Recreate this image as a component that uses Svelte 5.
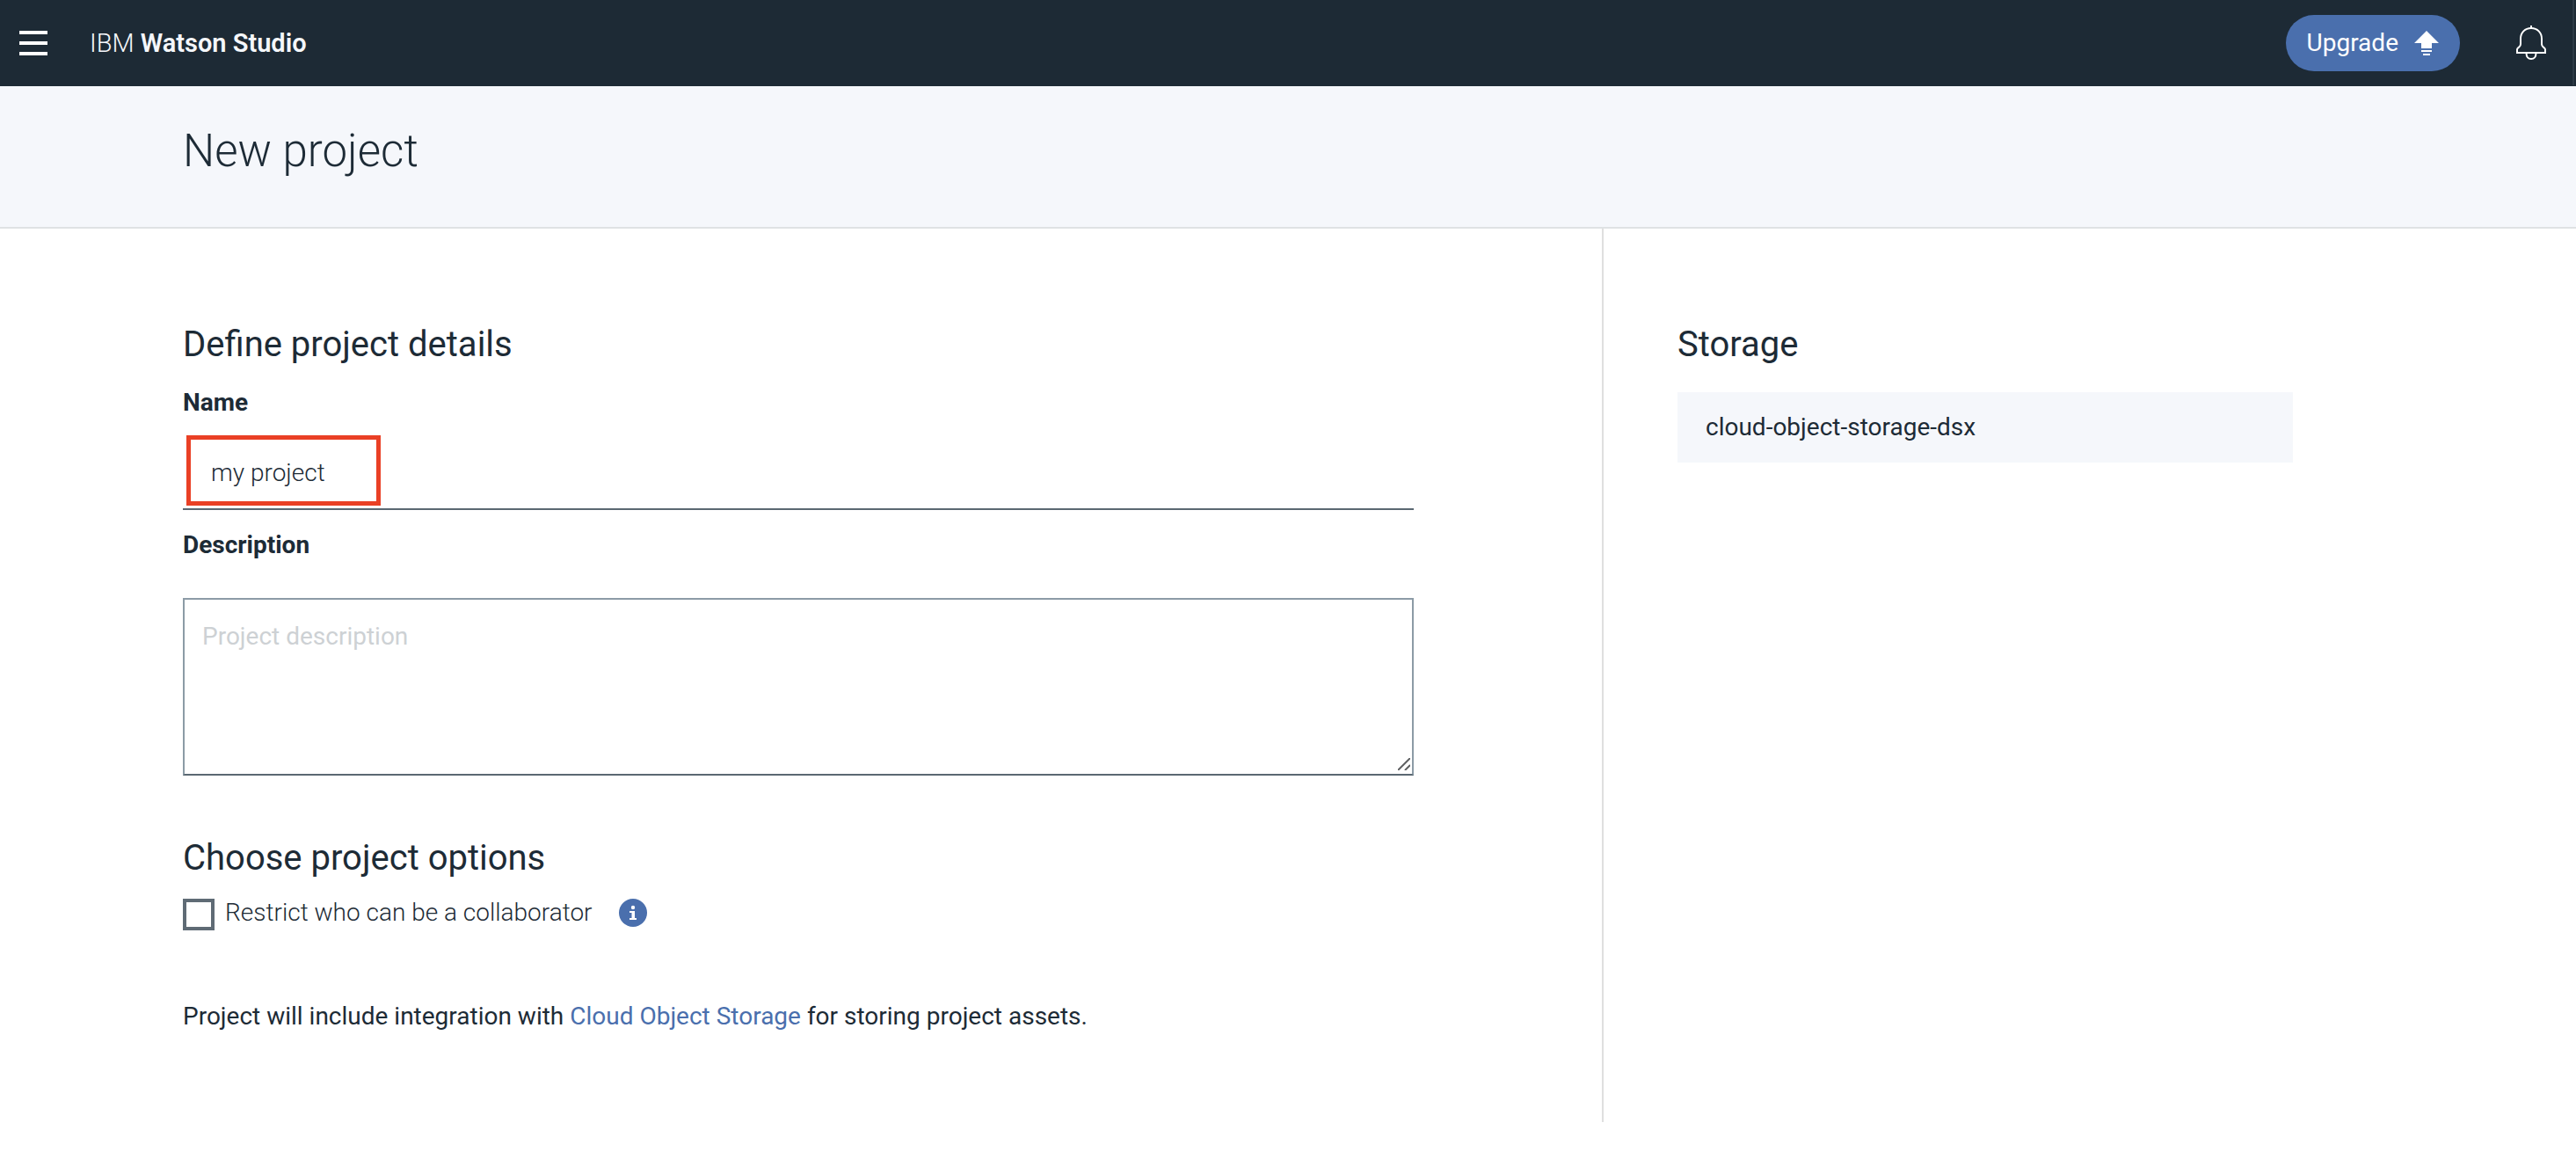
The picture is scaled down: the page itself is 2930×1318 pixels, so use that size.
<script lang="ts">
  let name = $state('my project');
  let description = $state('');
  let restricted = $state(false);
</script>

<div class="page">
  <header class="topbar">
    <button class="icon-button menu" type="button" aria-label="Menu">
      <svg width="32" height="28" viewBox="0 0 32 28" aria-hidden="true">
        <path d="M0 0h32v4H0zM0 12h32v4H0zM0 24h32v4H0z" fill="#fff" />
      </svg>
    </button>
    <a class="brand" href="#home">IBM <strong>Watson Studio</strong></a>
    <button class="upgrade" type="button">
      Upgrade
      <svg width="28" height="28" viewBox="0 0 28 28" aria-hidden="true">
        <path d="M14 0l14 14h-8v6H8v-6H0zM8 22h12v2H8zM10 26h8v2h-8z" fill="#fff" />
      </svg>
    </button>
    <button class="icon-button bell" type="button" aria-label="Notifications">
      <svg width="34" height="40" viewBox="0 0 34 40" aria-hidden="true">
        <g fill="none" stroke="#fff" stroke-width="2">
          <path d="M17 0v3" />
          <path d="M17 3C10 3 5 8 5 15v6c0 1.500-.4 2.400-1.500 3.300L1.800 25.800c-.5.500-.8 1-.8 1.700V31h32v-3.500c0-.7-.3-1.200-.8-1.700l-1.700-1.500C29.400 23.400 29 22.500 29 21v-6c0-7-5-12-12-12z" />
          <path d="M11.500 31.500c0 4 2.300 6.500 5.500 6.500s5.500-2.500 5.500-6.500" />
        </g>
      </svg>
    </button>
  </header>

  <div class="title-band">
    <h1>New project</h1>
  </div>

  <main class="content">
    <form class="details">
      <h2>Define project details</h2>
      <label class="field-label" for="project-name">Name</label>
      <div class="name-field">
        <input id="project-name" type="text" bind:value={name} />
        <span class="highlight" aria-hidden="true"></span>
      </div>
      <label class="field-label" for="project-description">Description</label>
      <div class="description-field">
        <textarea id="project-description" placeholder="Project description" bind:value={description}></textarea>
        <svg class="grip" width="14" height="14" viewBox="0 0 14 14" aria-hidden="true">
          <path d="M0 14L14 0M8 14l6-6" fill="none" stroke="#5f6062" stroke-width="2" />
        </svg>
      </div>

      <h2 class="options-heading">Choose project options</h2>
      <div class="option">
        <input id="restrict" type="checkbox" bind:checked={restricted} />
        <label for="restrict">Restrict who can be a collaborator</label>
        <button class="icon-button info" type="button" aria-label="More information">
          <svg width="32" height="32" viewBox="0 0 32 32" aria-hidden="true">
            <circle cx="16" cy="16" r="16" fill="#4a6fad" />
            <circle cx="16" cy="10" r="2.200" fill="#fff" />
            <path d="M12 14h6v8h2v2h-8v-2h2.500v-6H12z" fill="#fff" />
          </svg>
        </button>
      </div>
      <p>
        Project will include integration with <a href="#storage">Cloud Object Storage</a> for storing project assets.
      </p>
    </form>

    <aside class="storage" id="storage">
      <h2>Storage</h2>
      <div class="storage-item">cloud-object-storage-dsx</div>
    </aside>
  </main>
</div>

<style>
  :global(body) {
    margin: 0;
    background: #fff;
  }
  .page {
    color: #1d2b36;
    font-family: Roboto, 'Liberation Sans', sans-serif;
    font-size: 28px;
    font-weight: 400;
    line-height: 40px;
  }
  button,
  input,
  textarea {
    box-sizing: border-box;
    margin: 0;
    font: inherit;
    color: inherit;
  }
  svg {
    display: block;
  }
  .topbar {
    position: relative;
    display: flex;
    align-items: center;
    height: 98px;
    padding: 0 34px 0 22px;
    box-sizing: border-box;
    background: #1d2a35;
    color: #fff;
  }
  .topbar::after {
    content: '';
    position: absolute;
    top: 0;
    right: 2px;
    width: 2px;
    height: 97px;
    background: #2d3a45;
  }
  .icon-button {
    padding: 0;
    border: 0;
    background: none;
  }
  .brand {
    margin-left: 48px;
    color: #f5f7fb;
    font-size: 29px;
    font-weight: 300;
    text-decoration: none;
  }
  .brand strong {
    font-weight: 600;
  }
  .upgrade {
    display: flex;
    align-items: center;
    gap: 18px;
    height: 64px;
    margin-left: auto;
    padding: 0 24px;
    border: 0;
    border-radius: 32px;
    background: #4a6fad;
    color: #fff;
  }
  .bell {
    margin-left: 64px;
  }
  .title-band {
    padding: 42px 208px 54px;
    border-bottom: 2px solid #dfe2e4;
    background: #f5f7fb;
  }
  h1 {
    margin: 0;
    font-size: 51px;
    font-weight: 300;
    line-height: 64px;
  }
  h2 {
    margin: 0;
    font-size: 40px;
    font-weight: 400;
    line-height: 52px;
  }
  .content {
    display: grid;
    grid-template-columns: minmax(0, 1824fr) minmax(0, 1106fr);
  }
  .details {
    padding: 106px 214px 100px 208px;
    border-right: 2px solid #dfdfdf;
  }
  .field-label {
    display: block;
    margin-top: 20px;
    font-weight: 700;
  }
  .name-field {
    position: relative;
    margin-top: 16px;
  }
  .name-field input {
    display: block;
    width: 100%;
    height: 86px;
    padding: 2px 32px 0;
    border: 0;
    border-bottom: 2px solid #5a6872;
    background: none;
    font-weight: 300;
  }
  .highlight {
    position: absolute;
    top: 1px;
    left: 4px;
    width: 221px;
    height: 80px;
    box-sizing: border-box;
    border: 5px solid #ea4025;
    pointer-events: none;
  }
  .description-field {
    position: relative;
    margin-top: 40px;
  }
  textarea {
    display: block;
    width: 100%;
    height: 202px;
    padding: 22px 20px;
    border: 2px solid #8c9ba6;
    border-bottom-color: #5a6872;
    background: none;
    resize: vertical;
  }
  textarea::-webkit-resizer {
    background: transparent;
  }
  textarea::placeholder {
    color: #cdd1d4;
    opacity: 1;
  }
  .grip {
    position: absolute;
    right: 4px;
    bottom: 6px;
    pointer-events: none;
  }
  .options-heading {
    margin-top: 68px;
  }
  .option {
    display: flex;
    align-items: center;
    margin-top: 16px;
  }
  .option input {
    align-self: flex-end;
    appearance: none;
    width: 36px;
    height: 36px;
    border: 4px solid #5f6b75;
    background: #fff;
  }
  .option label {
    margin-left: 12px;
    font-weight: 300;
  }
  .info {
    margin-left: 30px;
  }
  p {
    margin: 78px 0 0;
  }
  p a {
    color: #4a6fad;
    text-decoration: none;
  }
  .storage {
    padding: 106px 84px 0;
  }
  .storage-item {
    max-width: 700px;
    box-sizing: border-box;
    margin-top: 28px;
    padding: 20px 32px;
    background: #f5f7fb;
  }
</style>
